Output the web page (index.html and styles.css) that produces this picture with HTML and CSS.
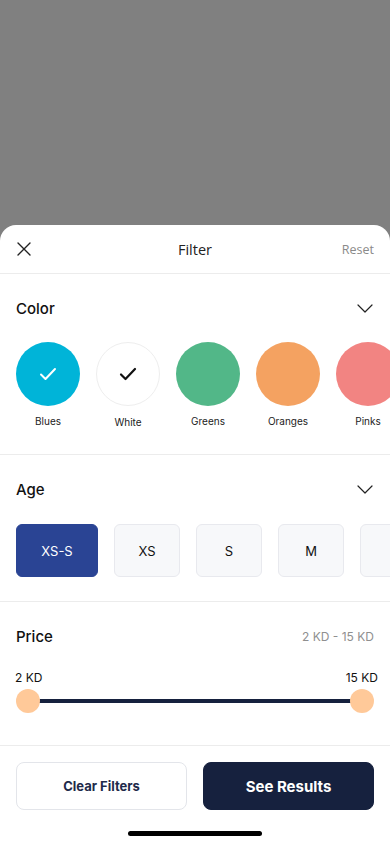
FILE: index.html
```html
<!DOCTYPE html>
<html>
<head>
<meta charset="utf-8">
<link rel="stylesheet" href="styles.css">
</head>
<body>
<div class="backdrop"></div>
<div class="sheet">
  <header class="head">
    <button class="close" aria-label="Close">
      <svg width="14" height="14" viewBox="0 0 14 14"><path d="M1 1L13 13M13 1L1 13" stroke="#222" stroke-width="1.4" fill="none" stroke-linecap="round"/></svg>
    </button>
    <div class="title">Filter</div>
    <div class="reset">Reset</div>
  </header>

  <section class="sec sec-color">
    <div class="sec-head">
      <div class="sec-title">Color</div>
      <svg class="chev" width="16" height="9" viewBox="0 0 16 9"><path d="M1 1L8 8L15 1" stroke="#222" stroke-width="1.2" fill="none" stroke-linecap="round" stroke-linejoin="round"/></svg>
    </div>
    <div class="swatches">
      <div class="sw"><div class="dot blue"><svg width="18" height="14" viewBox="0 0 18 14"><path d="M2 7.5L6.5 12L16 2" stroke="#fff" stroke-width="2" fill="none" stroke-linecap="round" stroke-linejoin="round"/></svg></div><div class="lbl">Blues</div></div>
      <div class="sw"><div class="dot white"><svg width="18" height="14" viewBox="0 0 18 14"><path d="M2 7.5L6.5 12L16 2" stroke="#111" stroke-width="2.2" fill="none" stroke-linecap="round" stroke-linejoin="round"/></svg></div><div class="lbl lbl-w">White</div></div>
      <div class="sw"><div class="dot green"></div><div class="lbl">Greens</div></div>
      <div class="sw"><div class="dot orange"></div><div class="lbl">Oranges</div></div>
      <div class="sw"><div class="dot pink"></div><div class="lbl">Pinks</div></div>
    </div>
  </section>

  <section class="sec sec-age">
    <div class="sec-head">
      <div class="sec-title">Age</div>
      <svg class="chev" width="16" height="9" viewBox="0 0 16 9"><path d="M1 1L8 8L15 1" stroke="#222" stroke-width="1.2" fill="none" stroke-linecap="round" stroke-linejoin="round"/></svg>
    </div>
    <div class="chips">
      <div class="chip on wide">XS-S</div>
      <div class="chip">XS</div>
      <div class="chip">S</div>
      <div class="chip">M</div>
      <div class="chip"></div>
    </div>
  </section>

  <section class="sec sec-price">
    <div class="sec-head">
      <div class="sec-title">Price</div>
      <div class="range-txt">2 KD - 15 KD</div>
    </div>
    <div class="price-labels"><span>2 KD</span><span>15 KD</span></div>
    <div class="slider">
      <div class="track"></div>
      <div class="thumb t-left"></div>
      <div class="thumb t-right"></div>
    </div>
  </section>

  <footer class="foot">
    <button class="btn clear">Clear Filters</button>
    <button class="btn see">See Results</button>
  </footer>
  <div class="home"><div class="bar"></div></div>
</div>
</body>
</html>
```

FILE: styles.css
```css
* { box-sizing: border-box; }
html, body { margin: 0; padding: 0; }
body {
  width: 390px;
  height: 844px;
  overflow: hidden;
  background: #808080;
  font-family: Inter, "Noto Sans", sans-serif;
  color: #1a1a1a;
  display: flex;
  flex-direction: column;
}
.backdrop { height: 225px; flex: none; }
.sheet {
  flex: 1;
  background: #fff;
  border-radius: 16px 16px 0 0;
  display: flex;
  flex-direction: column;
  overflow: hidden;
}
.head {
  height: 49px;
  display: flex;
  align-items: center;
  justify-content: space-between;
  padding: 0 16px 0 17px;
  border-bottom: 1px solid #ececec;
  position: relative;
}
.close { background: none; border: 0; padding: 0; width: 14px; height: 14px; display: flex; }
.title {
  position: absolute;
  left: 0; right: 0;
  text-align: center;
  font-family: "Open Sans", sans-serif;
  font-size: 14.5px;
  color: #222;
  pointer-events: none;
}
.reset {
  font-family: "Open Sans", sans-serif;
  font-size: 12.5px;
  color: #8a8a8a;
}
.sec { border-bottom: 1px solid #ececec; }
.sec-head {
  display: flex;
  justify-content: space-between;
  align-items: center;
  padding: 0 17px 0 16px;
  height: 24px;
}
.sec-title { font-size: 15px; font-weight: 500; color: #111; }
.sec-color { padding: 22px 0 0; height: 181px; }
.swatches {
  display: flex;
  gap: 16px;
  padding: 22px 0 0 16px;
  overflow: hidden;
}
.sw { display: flex; flex-direction: column; align-items: center; width: 64px; flex: none; }
.dot {
  width: 64px; height: 64px; border-radius: 50%;
  display: flex; align-items: center; justify-content: center;
}
.blue { background: #00b4d8; }
.white { background: #fff; border: 1px solid #eeeeee; }
.green { background: #52b788; }
.orange { background: #f4a261; }
.pink { background: #f28482; }
.lbl { font-size: 10px; margin-top: 9px; color: #222; white-space: nowrap; }
.lbl-w { margin-top: 10px; }
.sec-age { padding: 22px 0 0; height: 147px; }
.chips {
  display: flex;
  gap: 16px;
  padding: 23px 0 0 16px;
  overflow: hidden;
}
.chip {
  flex: none;
  width: 66px;
  height: 53px;
  border-radius: 6px;
  background: #f7f8fa;
  border: 1px solid #e8e9ee;
  display: flex; align-items: center; justify-content: center;
  font-size: 13px;
  color: #111;
}
.chip.wide { width: 82px; }
.chip.on { background: #2a4494; border-color: #2a4494; color: #fff; }
.sec-price { padding: 22px 0 0; height: 144px; }
.range-txt { font-size: 12px; color: #8f8f8f; margin-right: -1px; }
.price-labels {
  display: flex; justify-content: space-between;
  padding: 22px 12px 0 15px;
  font-size: 12px; color: #111;
  height: 41px;
}
.slider { position: relative; height: 24px; margin: 0 16px; }
.track {
  position: absolute; left: 12px; right: 12px; top: 10px; height: 4px;
  background: #16213e;
}
.thumb {
  position: absolute; top: 0; width: 24px; height: 24px; border-radius: 50%;
  background: #ffc999;
}
.t-left { left: 0; }
.t-right { right: 0; }
.foot {
  display: flex; gap: 16px;
  padding: 16px 16px 0;
}
.btn {
  flex: 1; height: 48px; border-radius: 8px;
  font-family: Inter, "Noto Sans", sans-serif;
  font-weight: 700;
}
.clear { background: #fff; border: 1px solid #e3e5ea; color: #1e2a4a; font-size: 13px; }
.see { background: #16213e; border: 1px solid #16213e; color: #fff; font-size: 15px; }
.home { display: flex; justify-content: center; padding-top: 21px; }
.bar { width: 134px; height: 5px; border-radius: 3px; background: #000; }
```
